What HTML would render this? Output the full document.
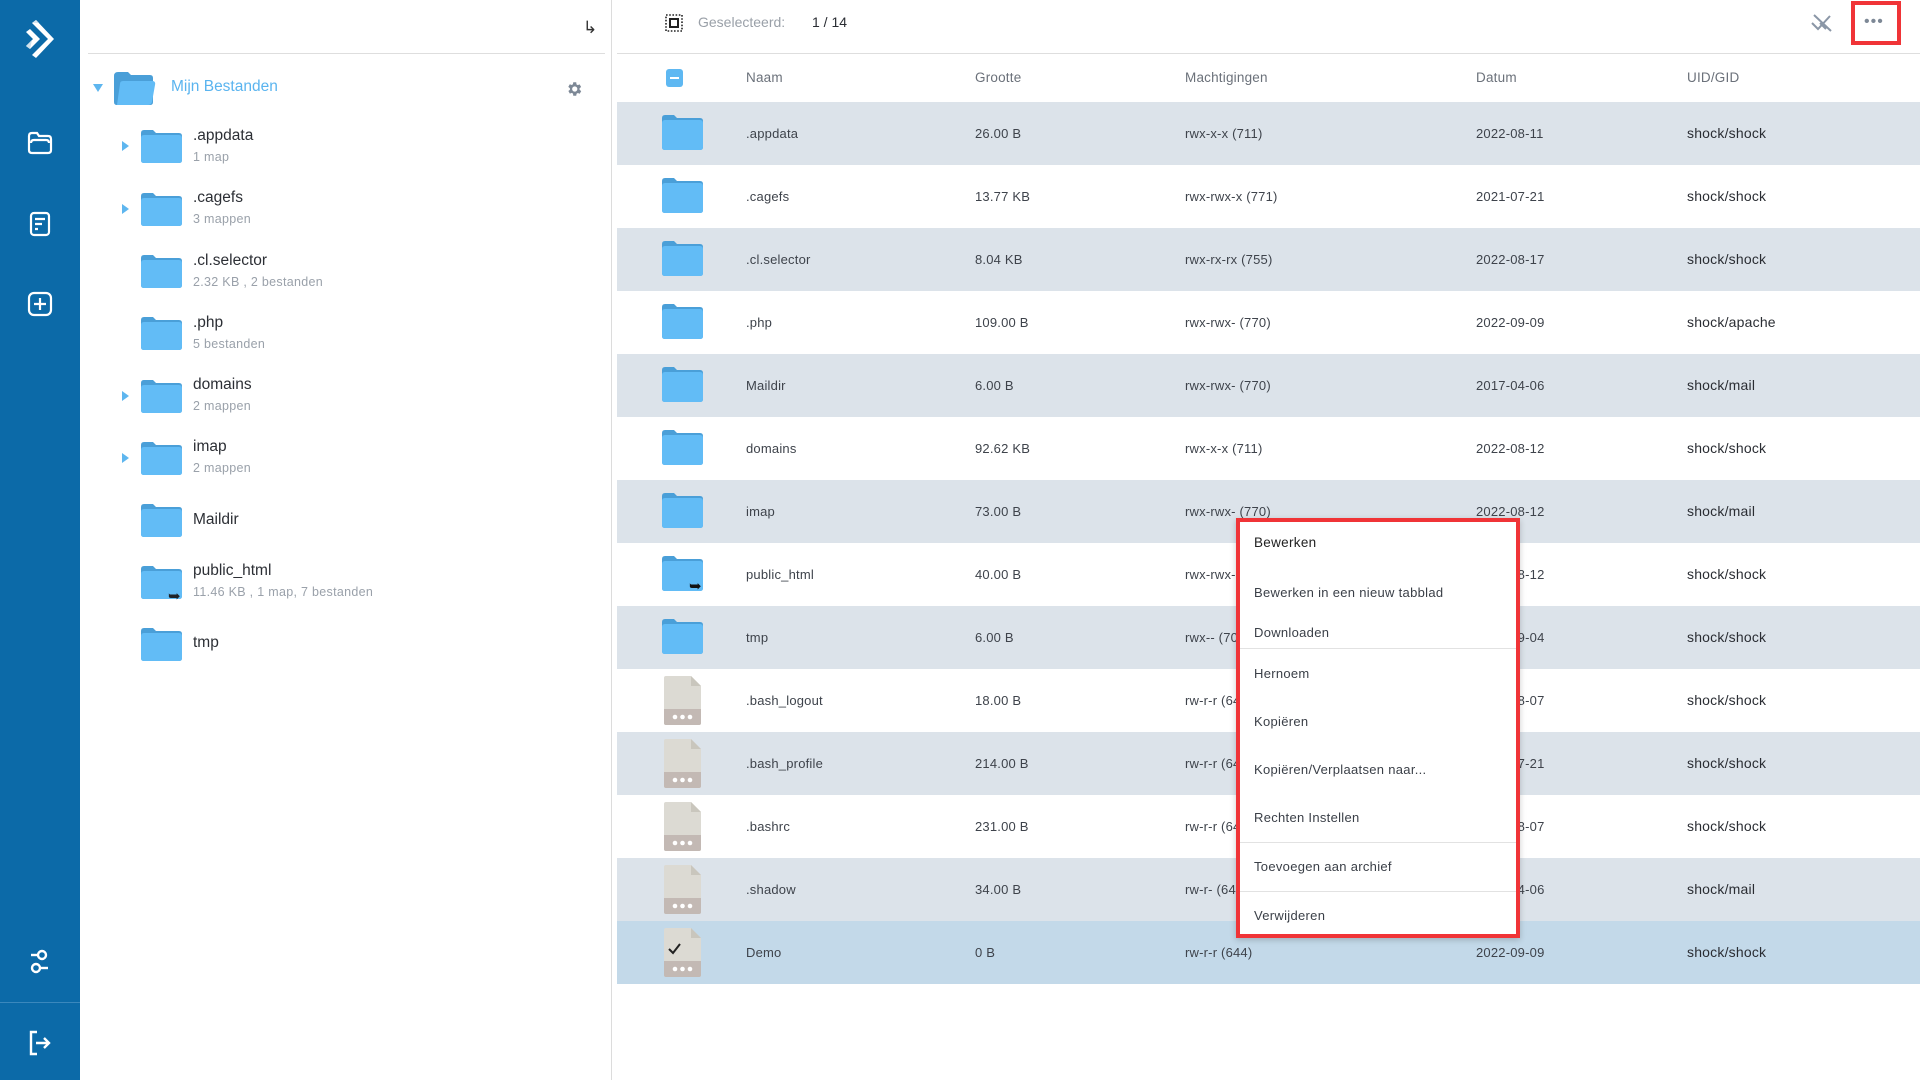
<!DOCTYPE html>
<html><head><meta charset="utf-8"><style>
*{margin:0;padding:0;box-sizing:border-box}
body{width:1920px;height:1080px;overflow:hidden;background:#fff;font-family:"Liberation Sans",sans-serif;position:relative;color:#3a3f47}
.a{position:absolute}
#side{left:0;top:0;width:80px;height:1080px;background:#0c6aa8}
.si{position:absolute;left:0;width:80px;display:flex;justify-content:center}
.tree .nm{position:absolute;left:193px;font-size:15.5px;color:#2c2f35}
.tree .sub{position:absolute;left:193px;font-size:12.5px;color:#9aa1aa;letter-spacing:.3px}
.tri{position:absolute;width:0;height:0;border-top:5px solid transparent;border-bottom:5px solid transparent;border-left:7px solid #5eb6ef}
.row{position:absolute;left:617px;width:1303px;height:63px}
.row span{position:absolute;top:0;line-height:63px;font-size:13px;color:#3e434b;letter-spacing:.2px}
.row .u{font-size:14px;color:#2a2d33}
.hd{position:absolute;top:54px;height:48px;line-height:48px;font-size:13.5px;color:#6b717a;letter-spacing:.2px}
.mi{position:absolute;left:1254px;font-size:13px;color:#3a3f47;letter-spacing:.3px}
.sep{position:absolute;left:1240px;width:276px;height:1px;background:#e2e2e2}
</style></head><body>
<div id="side" class="a">
 <div class="si" style="top:20px"><svg width="36" height="38" viewBox="0 0 36 38"><path d="M10 3 L26 19 L10 35 L14 38 L32 19 L14 0Z" fill="#fff"/><path d="M10 3 L14 0 L17 3Z" fill="#d8e6f0"/><path d="M4 12 L11 19 L4 26 L8 29 L18 19 L8 9Z" fill="#fff"/><path d="M8 29 L4 26 L10 20Z" fill="#cfe0ec"/></svg></div>
 <div class="si" style="top:131px"><svg width="26" height="24" viewBox="0 0 26 24" fill="none" stroke="#fff" stroke-width="2.2"><path d="M2 5 Q2 2 5 2 H10 L12 5 H21 Q24 5 24 8 V19 Q24 22 21 22 H5 Q2 22 2 19Z"/><path d="M4 12 Q4 9 7 9 H19 Q22 9 22 12"/></svg></div>
 <div class="si" style="top:211px"><svg width="22" height="26" viewBox="0 0 22 26" fill="none" stroke="#fff" stroke-width="2.2"><rect x="2" y="2" width="18" height="22" rx="3"/><path d="M6 8 H16 M6 13 H13 M6 18 H9"/></svg></div>
 <div class="si" style="top:291px"><svg width="26" height="26" viewBox="0 0 26 26" fill="none" stroke="#fff" stroke-width="2.2"><rect x="2" y="2" width="22" height="22" rx="5"/><path d="M13 7 V19 M7 13 H19"/></svg></div>
 <div class="si" style="top:948px"><svg width="22" height="28" viewBox="0 0 22 28" fill="none" stroke="#fff" stroke-width="2.4"><circle cx="13" cy="7" r="4"/><path d="M2 7 H9"/><circle cx="7" cy="20" r="4"/><path d="M11 20 H19"/></svg></div>
 <div class="a" style="left:0;top:1002px;width:80px;height:1px;background:#3b88bd"></div>
 <div class="si" style="top:1030px"><svg width="24" height="26" viewBox="0 0 24 26" fill="none" stroke="#fff" stroke-width="2.4"><path d="M9 2 H3 V24 H9"/><path d="M8 13 H21 M16 8 L21 13 L16 18"/></svg></div>
</div>

<div class="a" style="left:88px;top:53px;width:517px;height:1px;background:#dedede"></div>
<div class="a" style="left:611px;top:0;width:1px;height:1080px;background:#dcdcdc"></div>
<div class="a" style="left:583px;top:18px;font-size:17px;color:#333">↳</div>
<div class="tri" style="left:93px;top:84px;border:none;border-left:5px solid transparent;border-right:5px solid transparent;border-top:8px solid #5eb6ef"></div>
<svg class="a" style="left:114px;top:72px" width="42" height="33" viewBox="0 0 42 33"><path d="M0 4 Q0 0 4 0 H14 L17 3 H36 Q39 3 39 6 V30 Q39 33 36 33 H3 Q0 33 0 30Z" fill="#4a9fd8"/><path d="M6 12 Q6 9 9 9 H38 Q42 9 41 13 L38 30 Q37 33 34 33 H3 Z" fill="#62bcf6"/></svg>
<div class="a" style="left:171px;top:78px;font-size:15.5px;color:#5ab4ef">Mijn Bestanden</div>
<svg class="a" style="left:565px;top:80px" width="18" height="18" viewBox="0 0 24 24"><path fill="#7d8896" d="M19.4 13a7.5 7.5 0 0 0 0-2l2.1-1.6-2-3.5-2.5 1a7 7 0 0 0-1.7-1L15 3h-4l-.4 2.7a7 7 0 0 0-1.7 1l-2.5-1-2 3.5L6.6 11a7.5 7.5 0 0 0 0 2l-2.1 1.6 2 3.5 2.5-1a7 7 0 0 0 1.7 1L11 21h4l.4-2.7a7 7 0 0 0 1.7-1l2.5 1 2-3.5zM13 15.5a3.5 3.5 0 1 1 0-7 3.5 3.5 0 0 1 0 7z"/></svg>

<div class="tree" id="tree"></div>
<script>
var F='<path d="M0 3 Q0 0 3 0 H12 L15 3 H38 Q41 3 41 6 V30 Q41 33 38 33 H3 Q0 33 0 30Z" fill="#4a9fd8"/><path d="M0 8 Q0 5 3 5 H38 Q41 5 41 8 V30 Q41 33 38 33 H3 Q0 33 0 30Z" fill="#62bcf6"/>';
var t=[[130,1,".appdata","1 map",127],[193,1,".cagefs","3 mappen",189],[255,0,".cl.selector","2.32 KB , 2 bestanden",252],[317,0,".php","5 bestanden",314],[380,1,"domains","2 mappen",376],[442,1,"imap","2 mappen",438],[504,0,"Maildir","",511],[566,0,"public_html","11.46 KB , 1 map, 7 bestanden",562],[628,0,"tmp","",634]];
var s="";t.forEach(function(x){if(x[1])s+='<div class="tri" style="left:122px;top:'+(x[0]+11)+'px"></div>';
s+='<svg class="a" style="left:141px;top:'+x[0]+'px" width="41" height="33" viewBox="0 0 41 33">'+F+'</svg>';
s+='<div class="nm" style="top:'+x[4]+'px">'+x[2]+'</div>';if(x[3])s+='<div class="sub" style="top:'+(x[4]+23)+'px">'+x[3]+'</div>';});
s+='<div class="a" style="left:168px;top:587px;font-size:15px;color:#1f2328">➥</div>';
document.getElementById("tree").innerHTML=s;
</script>

<svg class="a" style="left:665px;top:14px" width="18" height="18" viewBox="0 0 18 18"><rect x="1" y="1" width="16" height="16" fill="none" stroke="#222" stroke-width="1.6" stroke-dasharray="1.6 1.6"/><rect x="5" y="5" width="8" height="8" fill="none" stroke="#222" stroke-width="2"/></svg>
<div class="a" style="left:698px;top:14px;font-size:14px;color:#9aa0a8">Geselecteerd:</div>
<div class="a" style="left:812px;top:14px;font-size:14px;color:#2a2d33">1 / 14</div>
<svg class="a" style="left:1810px;top:13px" width="24" height="20" viewBox="0 0 24 20" fill="none" stroke="#8a96a6" stroke-width="2"><path d="M2 10 L8 16 L20 3 M10 10 L16 16 M4 2 L21 18"/></svg>
<div class="a" style="left:1851px;top:1px;width:50px;height:44px;border:4px solid #f03437"></div>
<div class="a" style="left:1864px;top:17px;font-size:16px;color:#7d8896;letter-spacing:1px;line-height:10px">•••</div>
<div class="a" style="left:617px;top:53px;width:1303px;height:1px;background:#dedede"></div>

<div class="a" style="left:666px;top:69px;width:17px;height:18px;background:#5eb8f2;border-radius:3px"></div>
<div class="a" style="left:670px;top:77px;width:9px;height:2px;background:#fff"></div>
<div class="hd" style="left:746px">Naam</div>
<div class="hd" style="left:975px">Grootte</div>
<div class="hd" style="left:1185px">Machtigingen</div>
<div class="hd" style="left:1476px">Datum</div>
<div class="hd" style="left:1687px">UID/GID</div>

<div id="rows"></div>
<script>
var d=[["F",".appdata","26.00 B","rwx-x-x (711)","2022-08-11","shock/shock"],
["F",".cagefs","13.77 KB","rwx-rwx-x (771)","2021-07-21","shock/shock"],
["F",".cl.selector","8.04 KB","rwx-rx-rx (755)","2022-08-17","shock/shock"],
["F",".php","109.00 B","rwx-rwx- (770)","2022-09-09","shock/apache"],
["F","Maildir","6.00 B","rwx-rwx- (770)","2017-04-06","shock/mail"],
["F","domains","92.62 KB","rwx-x-x (711)","2022-08-12","shock/shock"],
["F","imap","73.00 B","rwx-rwx- (770)","2022-08-12","shock/mail"],
["L","public_html","40.00 B","rwx-rwx- (770)","2022-08-12","shock/shock"],
["F","tmp","6.00 B","rwx-- (700)","2022-09-04","shock/shock"],
["D",".bash_logout","18.00 B","rw-r-r (644)","2022-08-07","shock/shock"],
["D",".bash_profile","214.00 B","rw-r-r (644)","2021-07-21","shock/shock"],
["D",".bashrc","231.00 B","rw-r-r (644)","2022-08-07","shock/shock"],
["D",".shadow","34.00 B","rw-r- (640)","2017-04-06","shock/mail"],
["S","Demo","0 B","rw-r-r (644)","2022-09-09","shock/shock"]];
var h="";
var fold='<svg style="position:absolute;left:45px;top:13px" width="41" height="35" viewBox="0 0 41 35"><path d="M0 3 Q0 0 3 0 H12 L15 3 H38 Q41 3 41 6 V32 Q41 35 38 35 H3 Q0 35 0 32Z" fill="#4a9fd8"/><path d="M0 8 Q0 5 3 5 H38 Q41 5 41 8 V32 Q41 35 38 35 H3 Q0 35 0 32Z" fill="#62bcf6"/></svg>';
function file(chk){return '<svg style="position:absolute;left:47px;top:7px" width="37" height="49" viewBox="0 0 37 49"><path d="M2 0 H27 L37 10 V47 Q37 49 35 49 H2 Q0 49 0 47 V2 Q0 0 2 0Z" fill="#dcdad3"/><path d="M27 0 L37 10 H27Z" fill="#c9c6bd"/><path d="M0 33 H37 V47 Q37 49 35 49 H2 Q0 49 0 47Z" fill="#c3b9b4"/><circle cx="11" cy="41" r="2.3" fill="#fff"/><circle cx="18.5" cy="41" r="2.3" fill="#fff"/><circle cx="26" cy="41" r="2.3" fill="#fff"/>'+(chk?'<path d="M5 21 L9 25 L16 16" fill="none" stroke="#222" stroke-width="2"/>':'')+'</svg>';}
for(var i=0;i<d.length;i++){var r=d[i];var bg=r[0]=="S"?"#c3d9e9":(i%2==0?"#dce3ea":"#fff");
var ic=r[0]=="F"?fold:r[0]=="L"?fold+'<span style="left:72px;top:12px;font-size:15px;color:#111">➥</span>':file(r[0]=="S");
h+='<div class="row" style="top:'+(102+i*63)+'px;background:'+bg+'">'+ic+'<span style="left:129px">'+r[1]+'</span><span style="left:358px">'+r[2]+'</span><span style="left:568px">'+r[3]+'</span><span style="left:859px">'+r[4]+'</span><span class="u" style="left:1070px">'+r[5]+'</span></div>';}
document.getElementById("rows").innerHTML=h;
</script>

<div class="a" style="left:1236px;top:518px;width:284px;height:420px;background:#fff;border:4px solid #f03437;box-shadow:0 2px 6px rgba(0,0,0,.2)"></div>
<div class="mi" style="top:535px;font-size:13.5px;color:#222">Bewerken</div>
<div class="mi" style="top:585px">Bewerken in een nieuw tabblad</div>
<div class="mi" style="top:625px">Downloaden</div>
<div class="sep" style="top:648px"></div>
<div class="mi" style="top:666px">Hernoem</div>
<div class="mi" style="top:714px">Kopiëren</div>
<div class="mi" style="top:762px">Kopiëren/Verplaatsen naar...</div>
<div class="mi" style="top:810px">Rechten Instellen</div>
<div class="sep" style="top:842px"></div>
<div class="mi" style="top:859px">Toevoegen aan archief</div>
<div class="sep" style="top:891px"></div>
<div class="mi" style="top:908px">Verwijderen</div>
</body></html>
